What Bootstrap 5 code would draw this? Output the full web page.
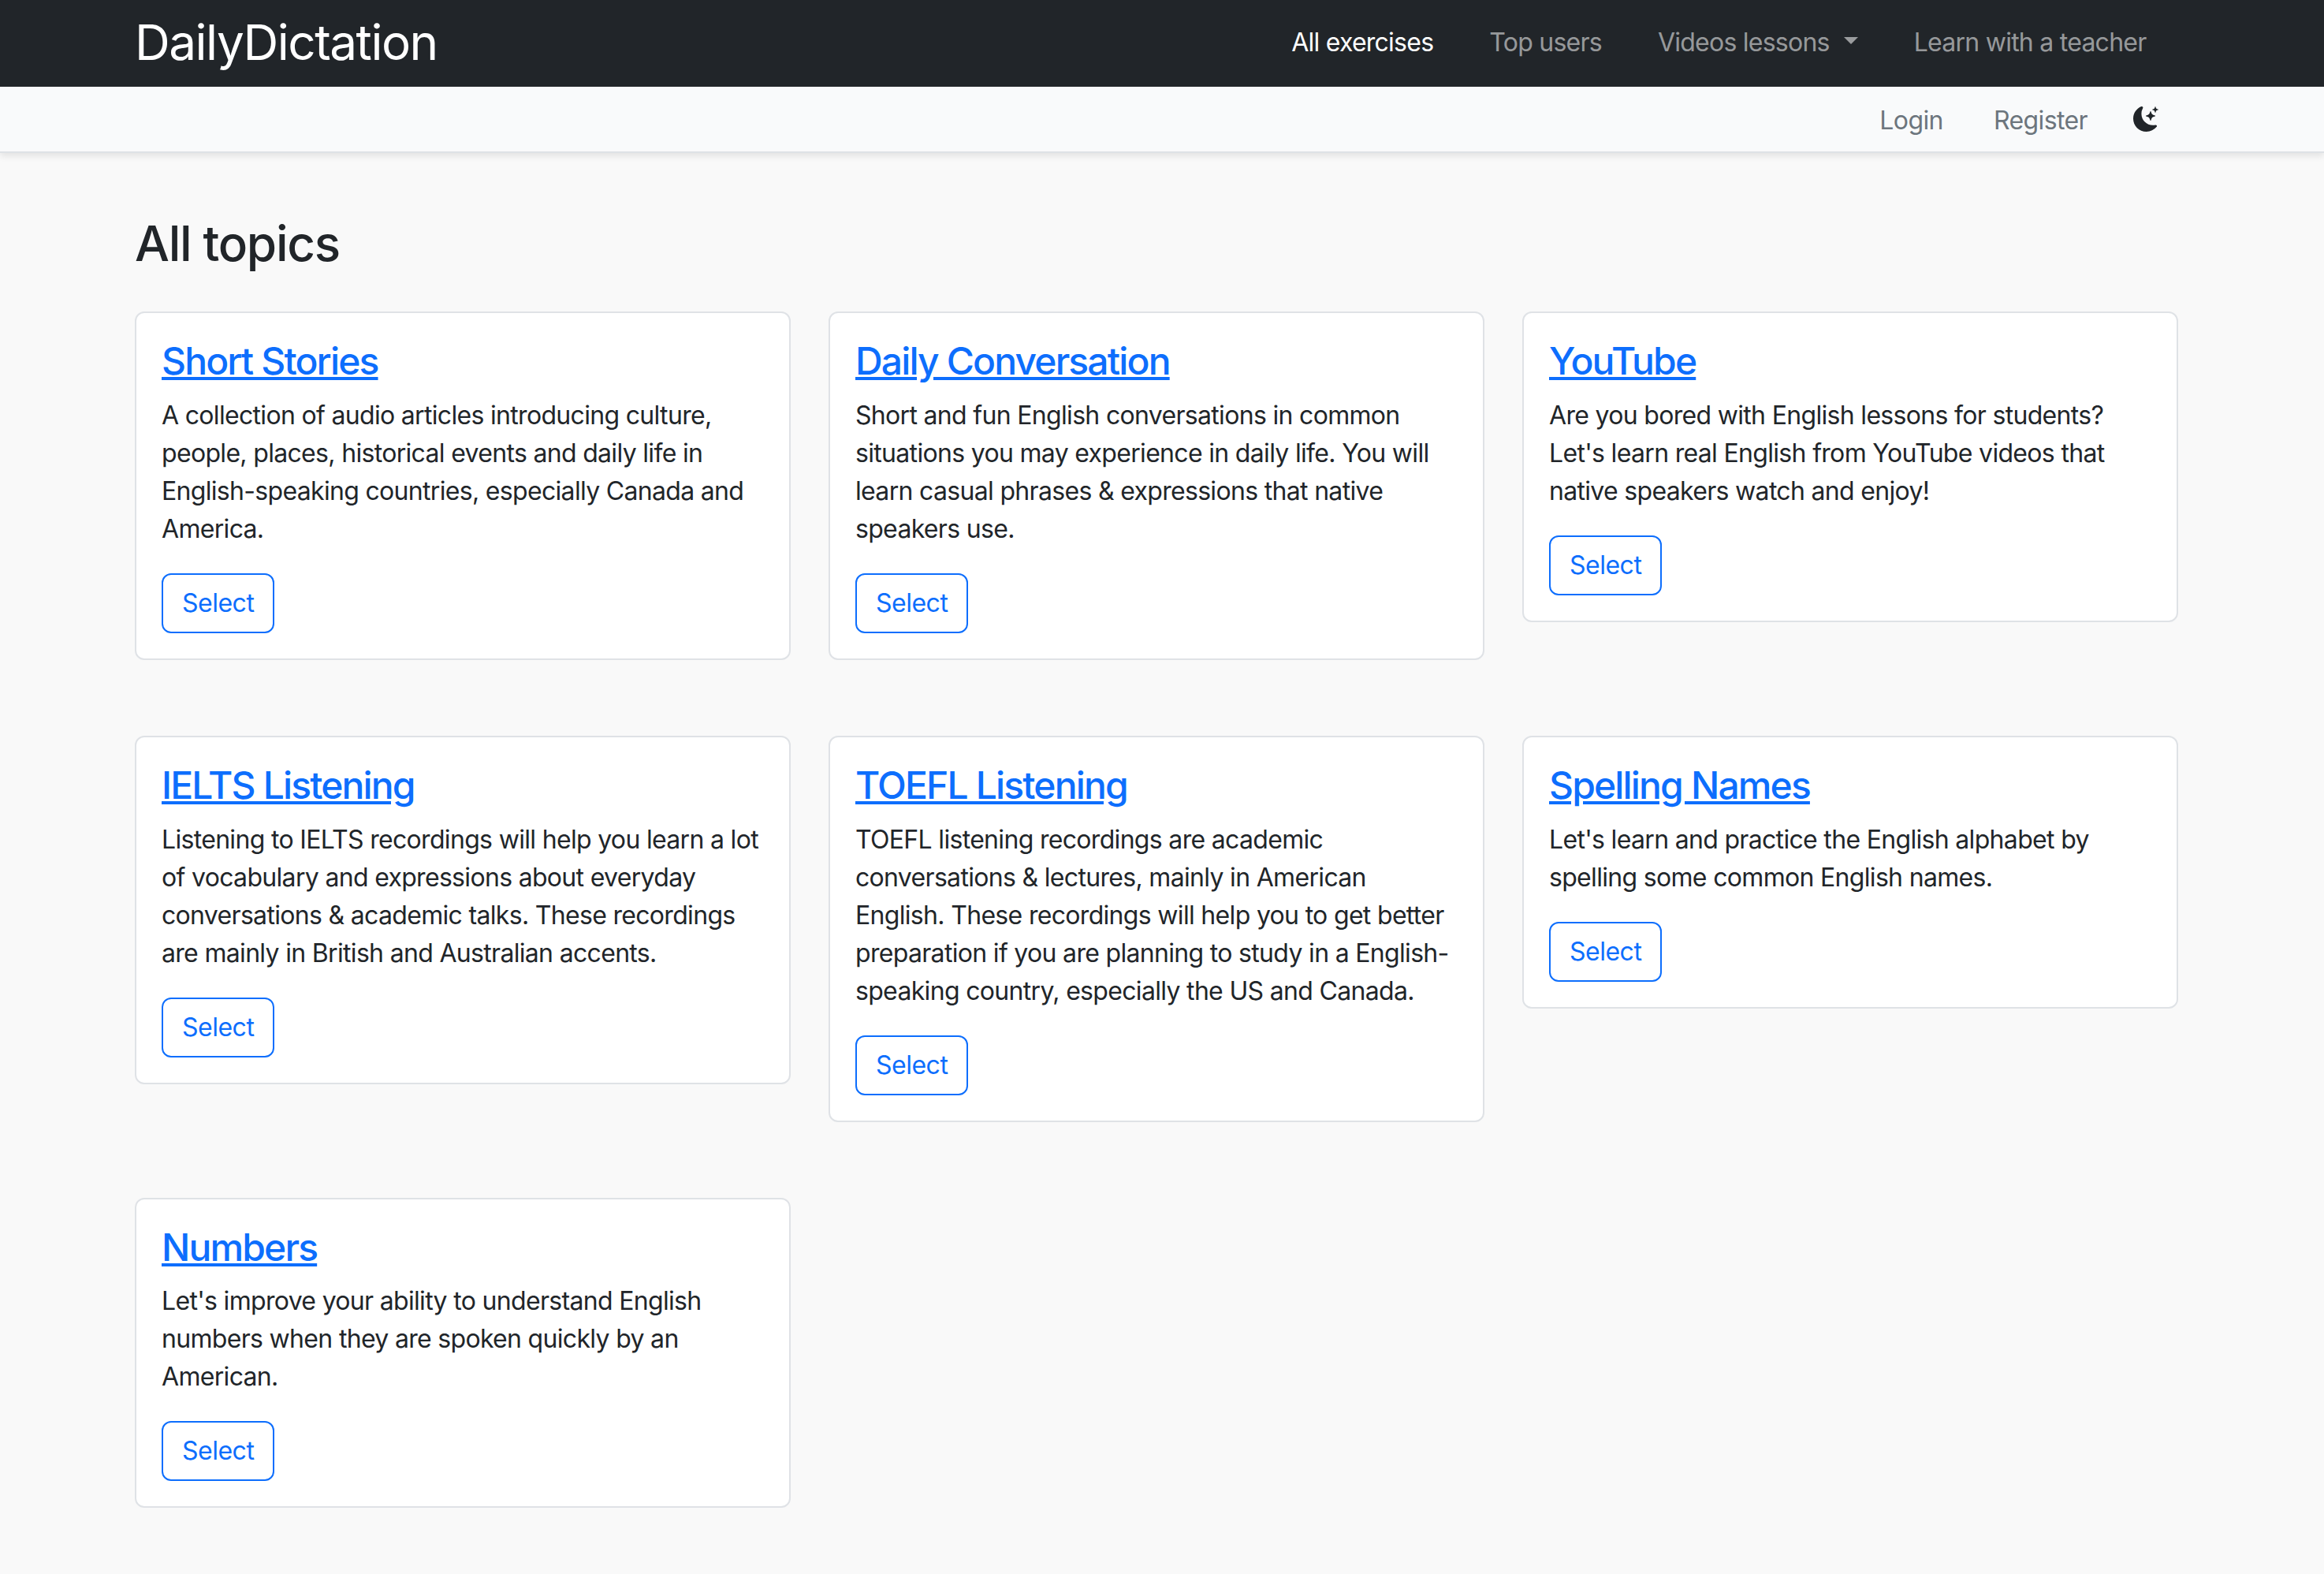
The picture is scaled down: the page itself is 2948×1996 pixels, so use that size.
<!DOCTYPE html>
<html lang="en">
<head>
<meta charset="utf-8">
<title>DailyDictation</title>
<link href="https://cdn.jsdelivr.net/npm/bootstrap@5.3.0/dist/css/bootstrap.min.css" rel="stylesheet">
<style>
html{font-size:32px}
body{font-family:Inter,"Liberation Sans",sans-serif;background:#f9f9f9;color:#212529;overflow:hidden}
.dd-wrap{width:2640px;max-width:none;margin-left:147px;margin-right:0}
.dd-top{height:110px;padding:0}
.dd-top .navbar-brand{font-size:62px;padding:0 0 2px;margin:0;line-height:1.2;letter-spacing:-1.5px}
.dd-top .navbar-nav{margin-right:5px;padding-bottom:3px}
.dd-top .nav-link{padding:16px 35.5px;font-size:32px;letter-spacing:-.75px}
.dd-top .dropdown-toggle::after{margin-left:18px;border-top-width:9.6px;border-left-width:9.6px;border-right-width:9.6px}
.dd-sub{height:84px;background:#f9fafb;box-shadow:0 4px 8px rgba(0,0,0,.09);border-bottom:2px solid #dee2e6}
.dd-sub .nav-link{color:#6c757d;padding:20px 32px 16px;letter-spacing:-.6px}
.dd-moon{width:32px;height:32px;margin-left:26px;margin-right:25px;color:#212529}
.dd-head{font-size:62px;font-weight:500;margin:0 0 49px;padding-top:78px;letter-spacing:-1.3px}
.dd-card{border-width:2px;border-color:#dfe2e6;border-radius:12px;margin-bottom:96px}
.dd-card .card-body{padding:32px}
.dd-title{font-size:48px;font-weight:500;margin-bottom:16px;letter-spacing:-1.85px}
.dd-text{font-size:32px;margin-bottom:32px;color:#212529;letter-spacing:-.68px}
.dd-btn{border-width:2px;border-radius:12px;font-size:32px;padding:12px 24px;letter-spacing:-.5px}
</style>
</head>
<body>
<nav class="navbar navbar-dark bg-dark dd-top">
  <div class="dd-wrap container-fluid d-flex align-items-center justify-content-between">
    <a class="navbar-brand" href="#">DailyDictation</a>
    <ul class="navbar-nav flex-row">
      <li class="nav-item"><a class="nav-link active" href="#">All exercises</a></li>
      <li class="nav-item"><a class="nav-link" href="#">Top users</a></li>
      <li class="nav-item"><a class="nav-link dropdown-toggle" href="#">Videos lessons</a></li>
      <li class="nav-item"><a class="nav-link" href="#">Learn with a teacher</a></li>
    </ul>
  </div>
</nav>
<div class="dd-sub">
  <div class="dd-wrap container-fluid h-100 d-flex align-items-center justify-content-end">
    <a class="nav-link" href="#">Login</a>
    <a class="nav-link" href="#">Register</a>
    <svg class="dd-moon" viewBox="0 0 16 16" fill="currentColor" aria-hidden="true">
      <path d="M6 .278a.768.768 0 0 1 .08.858 7.208 7.208 0 0 0-.878 3.46c0 4.021 3.278 7.277 7.318 7.277.527 0 1.04-.055 1.533-.16a.787.787 0 0 1 .81.316.733.733 0 0 1-.031.893A8.349 8.349 0 0 1 8.344 16C3.734 16 0 12.286 0 7.71 0 4.266 2.114 1.312 5.124.06A.752.752 0 0 1 6 .278z"/>
      <path d="M10.794 3.148a.217.217 0 0 1 .412 0l.387 1.162c.173.518.579.924 1.097 1.097l1.162.387a.217.217 0 0 1 0 .412l-1.162.387a1.734 1.734 0 0 0-1.097 1.097l-.387 1.162a.217.217 0 0 1-.412 0l-.387-1.162A1.734 1.734 0 0 0 9.31 6.593l-1.162-.387a.217.217 0 0 1 0-.412l1.162-.387a1.734 1.734 0 0 0 1.097-1.097l.387-1.162zM13.863.099a.145.145 0 0 1 .274 0l.258.774c.115.346.386.617.732.732l.774.258a.145.145 0 0 1 0 .274l-.774.258a1.156 1.156 0 0 0-.732.732l-.258.774a.145.145 0 0 1-.274 0l-.258-.774a1.156 1.156 0 0 0-.732-.732l-.774-.258a.145.145 0 0 1 0-.274l.774-.258c.346-.115.617-.386.732-.732L13.863.1z"/>
    </svg>
  </div>
</div>
<main class="dd-wrap container-fluid">
  <h1 class="dd-head">All topics</h1>
  <div class="row align-items-start">
    <div class="col-4"><div class="card dd-card"><div class="card-body">
      <h4 class="dd-title"><a href="#">Short Stories</a></h4>
      <p class="dd-text">A collection of audio articles introducing culture, people, places, historical events and daily life in English-speaking countries, especially Canada and America.</p>
      <a href="#" class="btn btn-outline-primary dd-btn">Select</a>
    </div></div></div>
    <div class="col-4"><div class="card dd-card"><div class="card-body">
      <h4 class="dd-title"><a href="#">Daily Conversation</a></h4>
      <p class="dd-text">Short and fun English conversations in common situations you may experience in daily life. You will learn casual phrases &amp; expressions that native speakers use.</p>
      <a href="#" class="btn btn-outline-primary dd-btn">Select</a>
    </div></div></div>
    <div class="col-4"><div class="card dd-card"><div class="card-body">
      <h4 class="dd-title"><a href="#">YouTube</a></h4>
      <p class="dd-text">Are you bored with English lessons for students? Let's learn real English from YouTube videos that native speakers watch and enjoy!</p>
      <a href="#" class="btn btn-outline-primary dd-btn">Select</a>
    </div></div></div>
    <div class="col-4"><div class="card dd-card"><div class="card-body">
      <h4 class="dd-title"><a href="#">IELTS Listening</a></h4>
      <p class="dd-text">Listening to IELTS recordings will help you learn a lot of vocabulary and expressions about everyday conversations &amp; academic talks. These recordings are mainly in British and Australian accents.</p>
      <a href="#" class="btn btn-outline-primary dd-btn">Select</a>
    </div></div></div>
    <div class="col-4"><div class="card dd-card"><div class="card-body">
      <h4 class="dd-title"><a href="#">TOEFL Listening</a></h4>
      <p class="dd-text">TOEFL listening recordings are academic conversations &amp; lectures, mainly in American English. These recordings will help you to get better preparation if you are planning to study in a English-speaking country, especially the US and Canada.</p>
      <a href="#" class="btn btn-outline-primary dd-btn">Select</a>
    </div></div></div>
    <div class="col-4"><div class="card dd-card"><div class="card-body">
      <h4 class="dd-title"><a href="#">Spelling Names</a></h4>
      <p class="dd-text">Let's learn and practice the English alphabet by spelling some common English names.</p>
      <a href="#" class="btn btn-outline-primary dd-btn">Select</a>
    </div></div></div>
    <div class="col-4"><div class="card dd-card"><div class="card-body">
      <h4 class="dd-title"><a href="#">Numbers</a></h4>
      <p class="dd-text">Let's improve your ability to understand English numbers when they are spoken quickly by an American.</p>
      <a href="#" class="btn btn-outline-primary dd-btn">Select</a>
    </div></div></div>
  </div>
</main>
<script src="https://cdn.jsdelivr.net/npm/bootstrap@5.3.0/dist/js/bootstrap.bundle.min.js"></script>
</body>
</html>
